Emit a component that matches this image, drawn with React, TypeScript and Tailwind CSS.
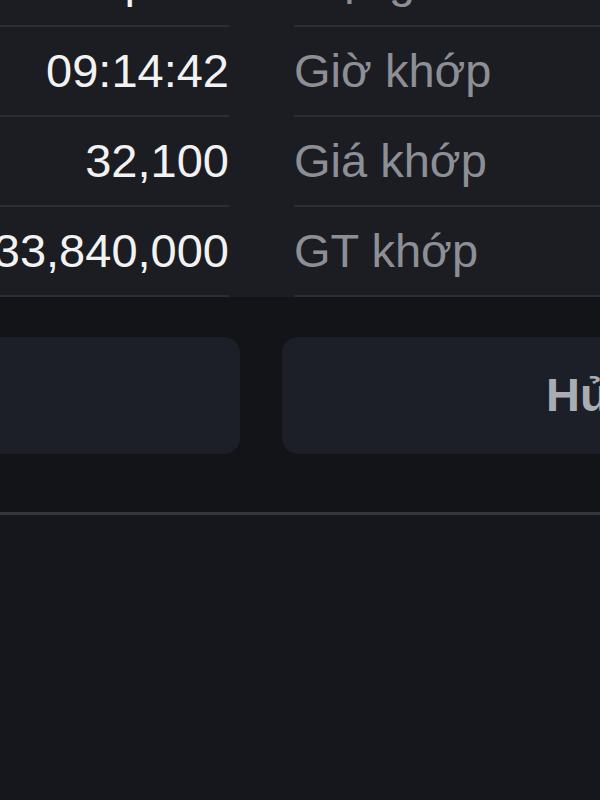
export default function App() {
  const rows = [
    { value: "Khớp hết", label: "Trạng thái" },
    { value: "09:14:42", label: "Giờ khớp" },
    { value: "32,100", label: "Giá khớp" },
    { value: "33,840,000", label: "GT khớp" },
  ];

  return (
    <div className="w-[600px] h-[800px] overflow-hidden bg-[#16171c] font-['Liberation_Sans',Arial,sans-serif]">
      {/* detail rows, scrolled so the first one is mostly out of view */}
      <div className="-mt-[63px] bg-[#1c1d22] grid grid-cols-[229px_1fr] gap-x-[65px]">
        {rows.map((r) => (
          <div key={r.label} className="contents">
            <div className="h-[90px] border-b-2 border-[#2c2e34] flex items-center justify-end text-[47px] text-[#f2f2f2] whitespace-nowrap">
              {r.value}
            </div>
            <div className="h-[90px] border-b-2 border-[#2c2e34] flex items-center text-[47px] text-[#8c8f96] whitespace-nowrap">
              {r.label}
            </div>
          </div>
        ))}
      </div>

      {/* action buttons */}
      <div className="bg-[#131418] pt-[40px] pb-[58px] flex gap-[42px] -ml-[400px] w-[1400px]">
        <button className="w-[640px] h-[117px] shrink-0 rounded-[16px] bg-[#1c1f27] text-[47px] font-bold text-[#a9acb3]">
          Đóng
        </button>
        <button className="w-[614px] h-[117px] shrink-0 rounded-[16px] bg-[#1c1f27] text-[47px] font-bold text-[#a9acb3] flex items-center justify-start pl-[264px] whitespace-nowrap">
          Hủy lệnh
        </button>
      </div>

      <div className="h-[3px] bg-[#34363c]" />
    </div>
  );
}
